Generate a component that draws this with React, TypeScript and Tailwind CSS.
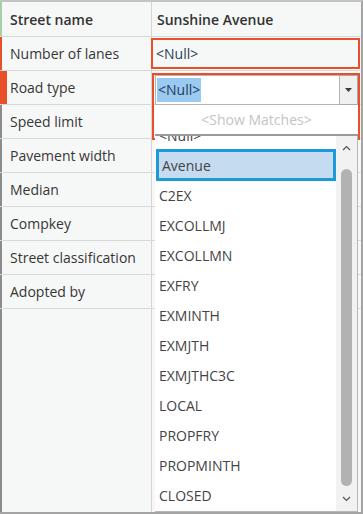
import React from "react";

const ORANGE = "border-[#e8502a]";

type Row = { label: string; bar: string; wide?: boolean };

const rows: Row[] = [
  { label: "Number of lanes", bar: "w-[2px] bg-[#e8502a]" },
  { label: "Road type", bar: "w-[7px] bg-[#e8502a]", wide: true },
  { label: "Speed limit", bar: "w-[2px] bg-[#8c8c8c]" },
  { label: "Pavement width", bar: "w-[2px] bg-[#8c8c8c]" },
  { label: "Median", bar: "w-[2px] bg-[#8c8c8c]" },
  { label: "Compkey", bar: "w-[2px] bg-[#8c8c8c]" },
  { label: "Street classification", bar: "w-[2px] bg-[#8c8c8c]" },
  { label: "Adopted by", bar: "w-[2px] bg-[#8c8c8c]" },
];

const options = [
  "<Null>",
  "Avenue",
  "C2EX",
  "EXCOLLMJ",
  "EXCOLLMN",
  "EXFRY",
  "EXMINTH",
  "EXMJTH",
  "EXMJTHC3C",
  "LOCAL",
  "PROPFRY",
  "PROPMINTH",
  "CLOSED",
];

const Chevron = ({ up }: { up?: boolean }) => (
  <svg width="9" height="6" viewBox="0 0 9 6" className="block">
    <path
      d={up ? "M1 5 L4.5 1.5 L8 5" : "M1 1 L4.5 4.5 L8 1"}
      fill="none"
      stroke="#555"
      strokeWidth="1.2"
    />
  </svg>
);

const RoadTypeDropdown = () => (
  <>
    {/* orange edit outline around the road type cell */}
    <div className={`absolute left-[152px] top-[71px] w-[208px] h-[67px] border-2 ${ORANGE}`} />

    <div className="absolute left-[155px] top-[73px] w-[203px] flex flex-col">
      <div className="flex h-[30px]">
        <div className="flex-1 bg-white border border-[#b4b4b4] flex items-center pl-[1px]">
          <span className="bg-[#9ac9f1] text-[#243c5a] px-[1px] leading-[24px]">&lt;Null&gt;</span>
        </div>
        <div className="w-[18px] bg-[#f0f0f0] border border-l-0 border-[#a9a9a9] flex items-center justify-center">
          <svg width="7" height="4" viewBox="0 0 7 4">
            <path d="M0 0 H7 L3.5 4 Z" fill="#3c3c3c" />
          </svg>
        </div>
      </div>
      <div className="h-[31px] bg-white border-b-2 border-[#9a9a9a] flex items-center justify-center text-[#c4c4c4]">
        &lt;Show Matches&gt;
      </div>
      <div className="h-[376px] bg-white border-b border-r border-[#b8b8b8] flex overflow-hidden">
        <div className="flex-1 flex flex-col -mt-[16px] pl-px">
          {options.map((o) => (
            <div
              key={o}
              className={`h-[30px] shrink-0 flex items-center pl-[3px] text-[#444] ${
                o === "Avenue" ? "h-[32px] -mt-px -mb-px bg-[#c5dcf0] border-[3px] border-[#1b9ad6] pl-0" : ""
              }`}
            >
              {o}
            </div>
          ))}
        </div>
        <div className="w-[21px] bg-[#f2f2f2] flex flex-col items-center pt-[9px] pb-[9px]">
          <Chevron up />
          <div className="w-[11px] flex-1 mt-[18px] mb-[10px] rounded-full bg-[#b2b2b2]" />
          <Chevron />
        </div>
      </div>
    </div>
  </>
);

export default function App() {
  return (
    <div
      className="relative w-[363px] h-[514px] bg-white border-t-2 border-t-[#c4c4c4] border-r-2 border-r-[#a4a4a4] border-b-2 border-b-[#a4a4a4] flex flex-col text-[14px] text-[#363636] overflow-hidden"
      style={{ fontFamily: '"Open Sans", "Noto Sans", sans-serif' }}
    >
      <div className="flex h-[35px] border-b border-[#d8d8d8] bg-[#f6f7f7] font-semibold text-[#333]">
        <div className="w-[2px] bg-[#a8d0a8]" />
        <div className="w-[150px] border-r border-[#d4d4d4] flex items-center pl-[8px]">Street name</div>
        <div className="flex-1 flex items-center pl-[5px]">Sunshine Avenue</div>
      </div>

      {rows.map((r, i) => (
        <div key={r.label} className="flex h-[34px] border-b border-[#d8d8d8] bg-[#f6f7f7]">
          <div className={`${r.bar} shrink-0`} />
          <div
            className={`${r.wide ? "w-[145px] pl-[3px]" : "w-[150px] pl-[8px]"} border-r border-[#d4d4d4] flex items-center`}
          >
            {r.label}
          </div>
          {i === 0 ? (
            <div className={`flex-1 -ml-px mr-px my-px border-2 ${ORANGE} flex items-center pl-[3px] text-[#2c3e55]`}>
              &lt;Null&gt;
            </div>
          ) : (
            <div className="flex-1" />
          )}
        </div>
      ))}

      <div className="flex flex-1 bg-[#f6f7f7]">
        <div className="w-[2px] bg-[#8c8c8c]" />
        <div className="w-[150px] border-r border-[#d4d4d4]" />
        <div className="flex-1" />
      </div>

      <RoadTypeDropdown />
    </div>
  );
}
